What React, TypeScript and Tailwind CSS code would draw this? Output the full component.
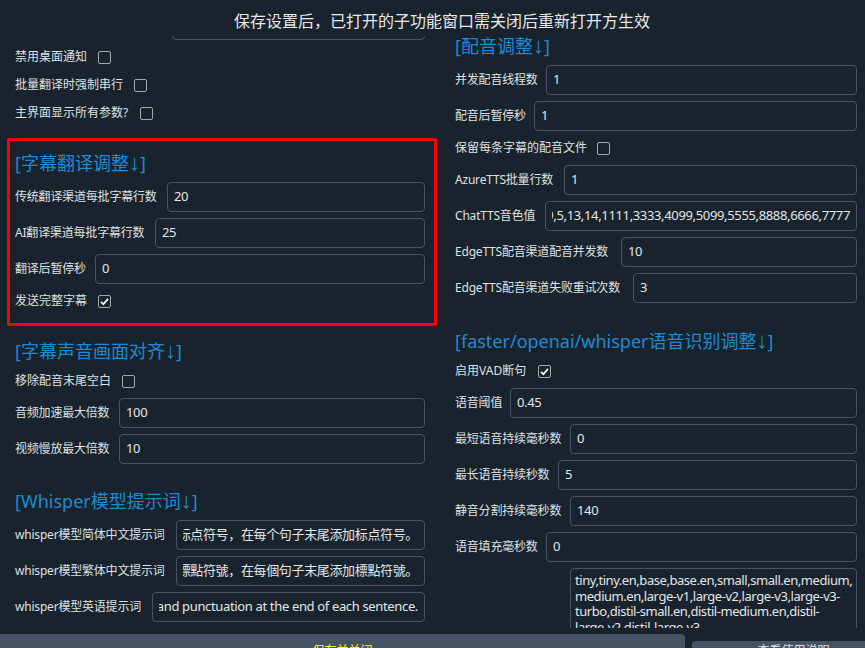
import React from 'react';

type Row =
  | { kind: 'head'; text: string; extra?: string }
  | { kind: 'field'; label: string; lw: string; value: string; end?: boolean }
  | { kind: 'check'; label: string; lw: string; checked?: boolean };

const font = { fontFamily: '"Noto Sans", "Noto Sans CJK SC", sans-serif' };
const arrowFont = { fontFamily: '"Liberation Sans", sans-serif' };

function Box({ checked }: { checked?: boolean }) {
  return (
    <div className="w-[13px] h-[13px] shrink-0 border border-[#a3a8ad] rounded-[2px] flex items-center justify-center">
      {checked && (
        <svg width="11" height="11" viewBox="0 0 11 11">
          <polyline points="2,5.8 4.4,8.2 9,2.8" fill="none" stroke="#f2f2f2" strokeWidth="1.8" />
        </svg>
      )}
    </div>
  );
}

function Item({ row }: { row: Row }) {
  if (row.kind === 'head') {
    return (
      <div className={`h-[22px] leading-[22px] mb-[2px] text-[18px] text-[#1d8ad1] whitespace-nowrap ${row.extra ?? ''}`}>
        [{row.text}<span className="text-[22px] leading-none" style={arrowFont}>↓</span>]
      </div>
    );
  }
  if (row.kind === 'check') {
    return (
      <div className="flex items-center h-[22px]">
        <span className={`${row.lw} shrink-0 mr-[11px] whitespace-nowrap text-[12px] text-[#dfe1e2]`}>{row.label}</span>
        <Box checked={row.checked} />
      </div>
    );
  }
  return (
    <div className="flex items-center h-[30px]">
      <span className={`${row.lw} shrink-0 mr-[8px] whitespace-nowrap text-[12px] tracking-[-0.2px] text-[#dfe1e2]`}>{row.label}</span>
      <div className="flex-1 min-w-0 h-[30px] border border-[#455364] rounded-[4px] px-[6px] flex items-center">
        <div className={`w-full overflow-hidden whitespace-nowrap flex ${row.end ? 'justify-end' : 'justify-start'} text-[13px] tracking-[-0.35px] text-[#e4e6e8]`}>
          <span className="shrink-0">{row.value}</span>
        </div>
      </div>
    </div>
  );
}

const topLeft: Row[] = [
  { kind: 'field', label: '视频处理线程数', lw: 'w-[149px]', value: '1' },
  { kind: 'check', label: '禁用桌面通知', lw: 'w-[72px]' },
  { kind: 'check', label: '批量翻译时强制串行', lw: 'w-[108px]' },
  { kind: 'check', label: '主界面显示所有参数?', lw: 'w-[114px]' },
];

const boxed: Row[] = [
  { kind: 'head', text: '字幕翻译调整' },
  { kind: 'field', label: '传统翻译渠道每批字幕行数', lw: 'w-[144px]', value: '20' },
  { kind: 'field', label: 'AI翻译渠道每批字幕行数', lw: 'w-[132px]', value: '25' },
  { kind: 'field', label: '翻译后暂停秒', lw: 'w-[72px]', value: '0' },
  { kind: 'check', label: '发送完整字幕', lw: 'w-[72px]', checked: true },
];

const bottomLeft: Row[] = [
  { kind: 'head', text: '字幕声音画面对齐', extra: 'mt-[8px]' },
  { kind: 'check', label: '移除配音末尾空白', lw: 'w-[96px]' },
  { kind: 'field', label: '音频加速最大倍数', lw: 'w-[96px]', value: '100' },
  { kind: 'field', label: '视频慢放最大倍数', lw: 'w-[96px]', value: '10' },
  { kind: 'head', text: 'Whisper模型提示词', extra: 'mt-[20px]' },
  { kind: 'field', label: 'whisper模型简体中文提示词', lw: 'w-[153px]', value: '这是一段普通话，请添加标点符号，在每个句子末尾添加标点符号。', end: true },
  { kind: 'field', label: 'whisper模型繁体中文提示词', lw: 'w-[153px]', value: '這是一段普通話，請添加標點符號，在每個句子末尾添加標點符號。', end: true },
  { kind: 'field', label: 'whisper模型英语提示词', lw: 'w-[129px]', value: 'This is an English speech, please add capitalization and punctuation at the end of each sentence.', end: true },
];

const right: Row[] = [
  { kind: 'head', text: '配音调整' },
  { kind: 'field', label: '并发配音线程数', lw: 'w-[83px]', value: '1' },
  { kind: 'field', label: '配音后暂停秒', lw: 'w-[71px]', value: '1' },
  { kind: 'check', label: '保留每条字幕的配音文件', lw: 'w-[131px]' },
  { kind: 'field', label: 'AzureTTS批量行数', lw: 'w-[101px]', value: '1' },
  { kind: 'field', label: 'ChatTTS音色值', lw: 'w-[82px]', value: '11,12,16,2222,4444,6653,7869,9999,5,13,14,1111,3333,4099,5099,5555,8888,6666,7777', end: true },
  { kind: 'field', label: 'EdgeTTS配音渠道配音并发数', lw: 'w-[158px]', value: '10' },
  { kind: 'field', label: 'EdgeTTS配音渠道失败重试次数', lw: 'w-[170px]', value: '3' },
  { kind: 'head', text: 'faster/openai/whisper语音识别调整', extra: 'mt-[21px]' },
  { kind: 'check', label: '启用VAD断句', lw: 'w-[72px]', checked: true },
  { kind: 'field', label: '语音阈值', lw: 'w-[47px]', value: '0.45' },
  { kind: 'field', label: '最短语音持续毫秒数', lw: 'w-[107px]', value: '0' },
  { kind: 'field', label: '最长语音持续秒数', lw: 'w-[95px]', value: '5' },
  { kind: 'field', label: '静音分割持续毫秒数', lw: 'w-[107px]', value: '140' },
  { kind: 'field', label: '语音填充毫秒数', lw: 'w-[83px]', value: '0' },
];

const models = [
  'tiny,tiny.en,base,base.en,small,small.en,medium,',
  'medium.en,large-v1,large-v2,large-v3,large-v3-',
  'turbo,distil-small.en,distil-medium.en,distil-',
  'large-v2,distil-large-v3',
];

export default function App() {
  return (
    <div className="w-[865px] h-[648px] overflow-hidden bg-[#19232d] flex flex-col" style={font}>
      <div className="h-[36px] shrink-0 flex justify-center pt-[10px] pl-[19px] text-[16px] leading-[22px] text-[#e6e8ea] whitespace-nowrap">
        保存设置后，已打开的子功能窗口需关闭后重新打开方生效
      </div>

      <div className="h-[592px] shrink-0 overflow-hidden">
        <div className="-mt-[26px] pl-[15px] grid grid-cols-[410px_402px] gap-x-[30px] items-start">
          <div className="flex flex-col gap-[6px]">
            {topLeft.map((r, i) => <Item key={i} row={r} />)}
            <div className="mt-[8px] -ml-[8px] -mr-[12px] pl-[5px] pr-[9px] pt-[11px] pb-[11px] border-[3px] border-[#ff0000] rounded-[2px] flex flex-col gap-[6px]">
              {boxed.map((r, i) => <Item key={i} row={r} />)}
            </div>
            {bottomLeft.map((r, i) => <Item key={i} row={r} />)}
          </div>

          <div className="pt-[25px] flex flex-col gap-[6px]">
            {right.map((r, i) => <Item key={i} row={r} />)}
            <div className="flex items-start">
              <span className="w-[107px] shrink-0 mr-[8px]" />
              <div className="flex-1 h-[80px] border border-[#455364] rounded-[4px] px-[4px] pt-[4px] text-[13px] leading-[15.6px] text-[#e4e6e8] tracking-[-0.45px]">
                {models.map((l) => (
                  <div key={l} className="whitespace-nowrap">{l}</div>
                ))}
              </div>
            </div>
          </div>
        </div>
      </div>

      <div className="pt-[6px] flex items-start gap-[7px]">
        <div className="w-[685px] h-[40px] shrink-0 bg-[#455364] rounded-tr-[4px] flex justify-center pt-[9px] text-[12px] leading-[16px] text-[#ffff00]">
          保存并关闭
        </div>
        <div className="flex-1 h-[40px] mt-[7px] bg-[#455364] rounded-tl-[4px] flex justify-center pl-[30px] pt-[2px] text-[12px] leading-[16px] text-[#dfe1e2]">
          查看使用说明
        </div>
      </div>
    </div>
  );
}
